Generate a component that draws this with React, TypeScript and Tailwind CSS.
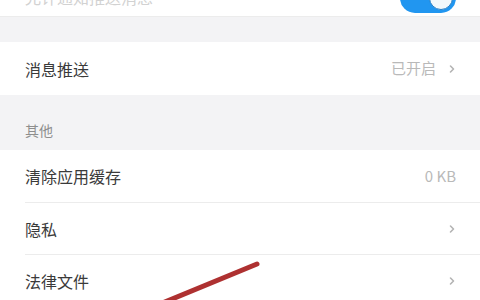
const font = "font-['Noto_Sans_CJK_SC','Noto_Sans',sans-serif]"

function Chevron() {
  return (
    <svg width="8" height="12" viewBox="0 0 8 12" className="ml-3 shrink-0">
      <path d="M2.5 3 L5.5 6 L2.5 9" fill="none" stroke="#b4b4b4" strokeWidth="1.6" strokeLinecap="round" strokeLinejoin="round" />
    </svg>
  )
}

function Row({
  label,
  value,
  arrow = true,
  height,
  divider = false,
}: {
  label: string
  value?: string
  arrow?: boolean
  height: string
  divider?: boolean
}) {
  return (
    <div className="bg-white pl-[25px]">
      <div className={`flex items-center pr-[24px] ${height} ${divider ? 'border-b border-[#ececec]' : ''}`}>
        <span className="flex-1 text-[16px] text-[#3a3a3a]">{label}</span>
        {value && <span className="text-[15px] text-[#b9b9b9]">{value}</span>}
        {arrow && <Chevron />}
      </div>
    </div>
  )
}

export default function App() {
  return (
    <div className={`relative h-[300px] w-[480px] overflow-hidden bg-[#f3f3f5] ${font}`}>
      {/* top row is scrolled mostly out of view */}
      <div className="flex h-[16px] items-end justify-between overflow-hidden bg-white pl-[25px] pr-[24px]">
        <span className="mb-[11px] text-[16px] leading-none text-[#d2d2d2]">允许通知推送消息</span>
        <div className="relative mb-[3px] h-[30px] w-[56px] rounded-full bg-[#2196f0]">
          <div className="absolute right-[3px] top-[3px] h-[24px] w-[24px] rounded-full border border-[#2a7fc4] bg-[#f4f8fb]" />
        </div>
      </div>
      <div className="h-[26px] border-t border-[#ececec]" />
      <Row label="消息推送" value="已开启" height="h-[53px]" />
      <div className="flex h-[55px] items-end pb-[9px] pl-[25px] text-[14px] text-[#8e8e8e]">其他</div>
      <Row label="清除应用缓存" value="0 KB" arrow={false} height="h-[53px]" divider />
      <Row label="隐私" height="h-[52px]" divider />
      <Row label="法律文件" height="h-[52px]" />
      <svg className="pointer-events-none absolute left-0 top-0" width="480" height="300">
        <line x1="257" y1="264" x2="160" y2="304" stroke="#a82020" strokeWidth="5" strokeLinecap="round" opacity="0.92" />
      </svg>
    </div>
  )
}
